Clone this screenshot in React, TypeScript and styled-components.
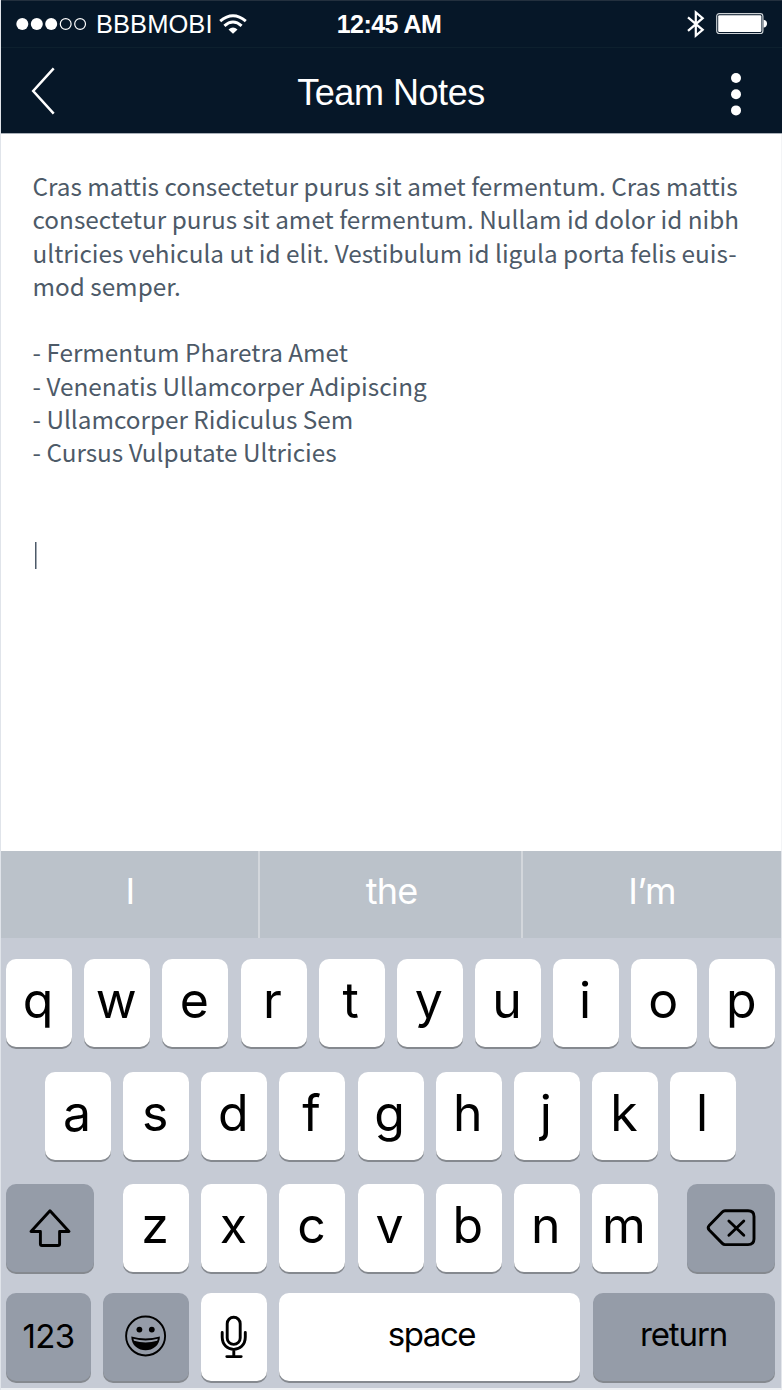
import React from "react";
import styled, { createGlobalStyle } from "styled-components";

const GlobalStyle = createGlobalStyle`
  * { box-sizing: border-box; }
  body { margin: 0; background: #fff; }
`;

const Screen = styled.div`
  width: 782px;
  height: 1390px;
  display: flex;
  flex-direction: column;
  overflow: hidden;
  background: #fff;
  border-left: 1px solid #e0e4ea;
  font-family: "Inter", sans-serif;
`;

const Header = styled.header`
  height: 134px;
  flex: none;
  background: #061728;
  border-top: 1px solid #23303e;
  border-bottom: 1px solid #a9b0b8;
  color: #fff;
  font-family: "Liberation Sans", Arial, sans-serif;
`;

const StatusBar = styled.div`
  height: 47px;
  display: grid;
  grid-template-columns: 1fr auto 1fr;
  align-items: center;
  padding: 0 14px 0 15px;
  border-bottom: 1px solid #0d202e;
`;

const StatusGroup = styled.div<{ $end?: boolean }>`
  display: flex;
  align-items: center;
  justify-content: ${(p) => (p.$end ? "flex-end" : "flex-start")};
  gap: ${(p) => (p.$end ? 11 : 0)}px;
  svg { display: block; flex: none; }
`;

const Carrier = styled.span`
  margin: 0 6px 0 8px;
  font-size: 25.5px;
  line-height: 30px;
  letter-spacing: 0.05px;
`;

const Clock = styled.span`
  margin-right: 6px;
  font-size: 25px;
  line-height: 30px;
  font-weight: 700;
  letter-spacing: -0.55px;
`;

const NavBar = styled.div`
  height: 85px;
  display: grid;
  grid-template-columns: 60px 1fr 60px;
  align-items: center;
  padding: 1px 16px 0 12px;
`;

const Title = styled.h1`
  margin: 0;
  padding: 3px 0 0 3px;
  text-align: center;
  font-size: 36px;
  line-height: 44px;
  font-weight: 400;
  letter-spacing: -0.45px;
`;

const IconButton = styled.button<{ $drop?: number }>`
  display: flex;
  justify-content: center;
  padding: ${(p) => p.$drop ?? 0}px 0 0;
  border: 0;
  background: none;
`;

const Note = styled.main`
  flex: 1;
  padding: 35px 0 0 31.5px;
  color: #4d5a68;
  font-family: "Noto Sans CJK JP", sans-serif;
  font-size: 24.32px;
  line-height: 33.3px;
  border-right: 1px solid #f3f4f6;
`;

const NoteLine = styled.div`
  height: 33.3px;
  white-space: pre;
`;

const Caret = styled.div`
  width: 2px;
  height: 27px;
  margin: 73px 0 0 2.5px;
  background: linear-gradient(90deg, #4d5a68 50%, #a4abb4 50%);
`;

const Suggestions = styled.div`
  height: 87px;
  flex: none;
  margin-left: -1px;
  display: grid;
  grid-template-columns: 260px 263px 258px;
  background: #bbc2ca;
  border-right: 1px solid #e3e6eb;
`;

const Suggestion = styled.div`
  display: flex;
  align-items: center;
  justify-content: center;
  padding-bottom: 8px;
  color: #fff;
  font-size: 36px;
  letter-spacing: -0.8px;
  & + & { box-shadow: -2px 0 0 #d3d7dc; }
`;

const Keyboard = styled.div`
  height: 450px;
  flex: none;
  padding: 21px 0 0 5px;
  background: #c6cbd5;
  border-right: 1px solid #e3e6eb;
`;

const KeyRow = styled.div<{ $indent?: number; $after: number }>`
  display: flex;
  gap: 12.15px;
  height: 88px;
  margin: 0 0 ${(p) => p.$after}px ${(p) => p.$indent ?? 0}px;
`;

const Key = styled.button<{ $width?: number; $dark?: boolean; $left?: number; $right?: number }>`
  width: ${(p) => p.$width ?? 66}px;
  height: 88px;
  flex: none;
  display: flex;
  align-items: center;
  justify-content: center;
  margin: 0 ${(p) => p.$right ?? 0}px 0 ${(p) => p.$left ?? 0}px;
  padding: 0;
  border: 0;
  border-radius: 10px;
  background: ${(p) => (p.$dark ? "#959ca8" : "#fff")};
  box-shadow: 0 2px 0 #85898f;
  color: #000;
  font-family: inherit;
  line-height: 1;
  svg { display: block; overflow: visible; }
`;

const LetterKey = styled(Key)`
  padding: 0 2px 6px 0;
  font-size: 50px;
`;

const LabelKey = styled(Key)<{ $lift: number; $tracking: number; $shift?: number }>`
  padding: 0 0 ${(p) => p.$lift}px ${(p) => p.$shift ?? 0}px;
  font-size: 33px;
  letter-spacing: ${(p) => p.$tracking}px;
`;

const BottomEdge = styled.div`
  height: 2px;
  flex: none;
  background: #eef0f3;
`;

const Signal = () => (
  <svg width="72" height="14" viewBox="0 0 72 14" fill="#fff">
    <circle cx="6.3" cy="7" r="6" />
    <circle cx="20.8" cy="7" r="6" />
    <circle cx="35.2" cy="7" r="6" />
    <circle cx="49.7" cy="7" r="5.4" fill="none" stroke="#fff" strokeWidth="1.2" />
    <circle cx="64.1" cy="7" r="5.4" fill="none" stroke="#fff" strokeWidth="1.2" />
  </svg>
);

const Wifi = () => (
  <svg width="28" height="20" viewBox="0 0 28 20" fill="none" stroke="#fff" strokeWidth="3">
    <path d="M1.2 7.2 Q14 -3.7 26.8 7.2" />
    <path d="M5.4 11.8 Q14 4.2 22.6 11.8" />
    <path d="M9.5 15.5 Q14 11.6 18.5 15.5 L14 19.8 Z" fill="#fff" stroke="none" />
  </svg>
);

const Bluetooth = () => (
  <svg width="18" height="28" viewBox="0 0 18 28" fill="none" stroke="#fff" strokeWidth="2.2">
    <path d="M1 7.3 L15.7 19.8 L8.8 25.6 V2.4 L15.7 8.2 L1 20.9" />
  </svg>
);

const Battery = () => (
  <svg width="52" height="22" viewBox="0 0 52 22" fill="none">
    <rect x="0.7" y="0.7" width="46.2" height="19.8" rx="2.5" stroke="#cbd0d4" strokeWidth="1.2" />
    <rect x="2.2" y="2.2" width="43.2" height="16.8" rx="1.2" fill="#fff" />
    <path d="M47.6 6.8 C52.2 7.2 52.2 14.2 47.6 14.6 Z" fill="#fff" />
  </svg>
);

const BackIcon = () => (
  <svg width="24" height="48" viewBox="0 0 24 48" fill="none" stroke="#fff" strokeWidth="2.5">
    <path d="M22.7 1.3 L2.2 24 L22.7 46.7" />
  </svg>
);

const MoreIcon = () => (
  <svg width="12" height="44" viewBox="0 0 12 44" fill="#fff">
    <circle cx="6" cy="6" r="5" />
    <circle cx="6" cy="22.2" r="5" />
    <circle cx="6" cy="38.4" r="5" />
  </svg>
);

const ShiftIcon = () => (
  <svg width="42" height="38" viewBox="0 0 42 38" fill="none" stroke="#000" strokeWidth="2.9" strokeLinejoin="round">
    <path d="M21 1.8 L40 22.5 H30.6 V35 Q30.6 36.5 29 36.5 H13 Q11.4 36.5 11.4 35 V22.5 H2 Z" />
  </svg>
);

const DeleteIcon = () => (
  <svg width="50" height="38" viewBox="0 0 50 38" fill="none" stroke="#000" strokeWidth="2.9" strokeLinejoin="round" strokeLinecap="round">
    <path d="M19 1.8 H42 Q48 1.8 48 7.4 V30 Q48 35.6 42 35.6 H19 Q17.5 35.6 16.3 34.4 L3.2 21 Q1.2 18.7 3.2 16.4 L16.3 3 Q17.5 1.8 19 1.8 Z" />
    <path d="M22.9 12 L37.8 26.2 M37.8 12 L22.9 26.2" />
  </svg>
);

const SmileIcon = () => (
  <svg width="42" height="42" viewBox="0 0 42 42" fill="none">
    <circle cx="20.6" cy="20" r="19.5" stroke="#000" strokeWidth="1.9" />
    <circle cx="14.4" cy="13.6" r="2.9" fill="#000" />
    <circle cx="26.8" cy="13.6" r="2.9" fill="#000" />
    <path d="M6.3 20.4 Q20.6 24.6 34.9 20.4 C34.7 38.8 6.5 38.8 6.3 20.4 Z" fill="#000" />
    <path d="M8.4 22.8 Q20.6 26 32.8 22.8 L32.2 24.8 Q20.6 28 9 24.8 Z" fill="#959ca8" />
  </svg>
);

const MicIcon = () => (
  <svg width="28" height="44" viewBox="0 0 28 44" fill="none" stroke="#000" strokeWidth="2.9" strokeLinecap="round">
    <rect x="7.2" y="2.2" width="13" height="27.2" rx="6.5" />
    <path d="M2.2 17.5 V22 C2.2 38.5 25.3 38.5 25.3 22 V17.5 M13.8 34.5 V41.3 M6.8 41.6 H21.2" />
  </svg>
);

const noteLines = [
  "Cras mattis consectetur purus sit amet fermentum. Cras mattis",
  "consectetur purus sit amet fermentum. Nullam id dolor id nibh",
  "ultricies vehicula ut id elit. Vestibulum id ligula porta felis euis-",
  "mod semper.",
  "",
  "- Fermentum Pharetra Amet",
  "- Venenatis Ullamcorper Adipiscing",
  "- Ullamcorper Ridiculus Sem",
  "- Cursus Vulputate Ultricies",
];

const letters = (row: string) => row.split("").map((c) => <LetterKey key={c}>{c}</LetterKey>);

export default function App() {
  return (
    <Screen>
      <GlobalStyle />
      <Header>
        <StatusBar>
          <StatusGroup>
            <Signal />
            <Carrier>BBBMOBI</Carrier>
            <Wifi />
          </StatusGroup>
          <Clock>12:45 AM</Clock>
          <StatusGroup $end>
            <Bluetooth />
            <Battery />
          </StatusGroup>
        </StatusBar>
        <NavBar>
          <IconButton aria-label="Back"><BackIcon /></IconButton>
          <Title>Team Notes</Title>
          <IconButton aria-label="More" $drop={5}><MoreIcon /></IconButton>
        </NavBar>
      </Header>
      <Note>
        {noteLines.map((text, i) => (
          <NoteLine key={i}>{text}</NoteLine>
        ))}
        <Caret />
      </Note>
      <Suggestions>
        <Suggestion>I</Suggestion>
        <Suggestion>the</Suggestion>
        <Suggestion>I’m</Suggestion>
      </Suggestions>
      <Keyboard>
        <KeyRow $after={25} $indent={0.1}>{letters("qwertyuiop")}</KeyRow>
        <KeyRow $after={24} $indent={39}>{letters("asdfghjkl")}</KeyRow>
        <KeyRow $after={21}>
          <Key $dark $width={88} $right={17} aria-label="Shift"><ShiftIcon /></Key>
          {letters("zxcvbnm")}
          <Key $dark $width={88} $left={17} aria-label="Delete"><DeleteIcon /></Key>
        </KeyRow>
        <KeyRow $after={0}>
          <LabelKey $dark $lift={2} $tracking={-0.6} $width={85}>123</LabelKey>
          <Key $dark $width={86} aria-label="Emoji"><SmileIcon /></Key>
          <Key aria-label="Dictate"><MicIcon /></Key>
          <LabelKey $lift={6} $tracking={-1.4} $shift={3} $width={301}>space</LabelKey>
          <LabelKey $dark $lift={6} $tracking={-1.1} $width={182}>return</LabelKey>
        </KeyRow>
      </Keyboard>
      <BottomEdge />
    </Screen>
  );
}
